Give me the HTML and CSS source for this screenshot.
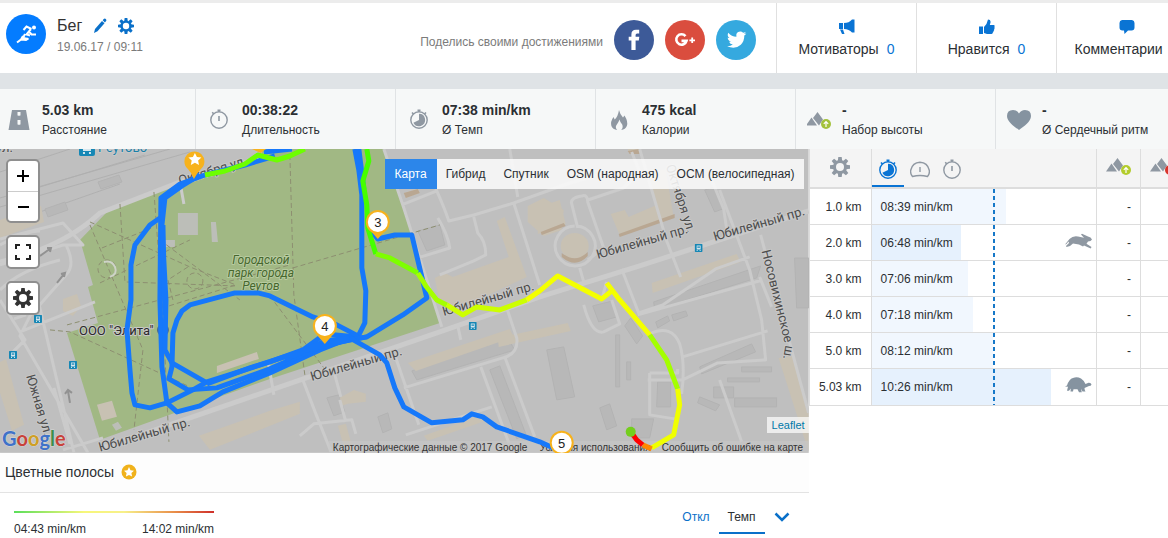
FILE: index.html
```html
<!DOCTYPE html>
<html lang="ru">
<head>
    <meta charset="UTF-8">
    <meta name="viewport" content="width=device-width, initial-scale=1.0">
    <title>Бег 19.06.17</title>
    <link rel="stylesheet" href="styles.css">
</head>
<body>
<!-- shared icons -->
<svg class="sprite" aria-hidden="true">
    <symbol id="gear" viewBox="0 0 20 20">
        <g fill="currentColor"><circle cx="10" cy="10" r="7"/>
        <path d="M8.3 0h3.4l.5 4H7.800zM8.300 20h3.400l.5-4H7.800zM0 8.300v3.400l4 .5V7.800zM20 8.300v3.400l-4 .5V7.800zM1.700 4.100l2.400-2.400 3.200 2.500-3.100 3.100zM18.300 4.100l-2.400-2.400-3.200 2.500 3.100 3.100zM1.700 15.900l2.400 2.400 3.200-2.500-3.100-3.100zM18.300 15.900l-2.400 2.400-3.200-2.500 3.100-3.100z"/></g>
        <circle class="gear-hole" cx="10" cy="10" r="4"/>
    </symbol>
    <symbol id="watch" viewBox="0 0 20 20">
        <g fill="none" stroke="currentColor"><circle cx="10" cy="11" r="8.200" stroke-width="1.400"/>
        <path d="M10 7v5" stroke-width="1.600"/><path d="M8.500 1.200h3M10 1v2M3.200 3.300l1.600 1.600" stroke-width="1.500"/></g>
    </symbol>
    <symbol id="pace" viewBox="0 0 20 20">
        <g fill="none" stroke="currentColor"><circle cx="10" cy="11" r="8.200" stroke-width="1.400"/>
        <path d="M8.500 1.200h3M10 1v2M3 3.500l1.600 1.600M17 3.500l-1.600 1.600" stroke-width="1.600"/></g>
        <path d="M10 11V4.800a6.200 6.200 0 1 1-5.600 9z" fill="currentColor"/>
    </symbol>
    <symbol id="hill" viewBox="0 0 26 18">
        <path d="M0 13.500L5.500 5.500l5.500 8zM7 6l4.500-6 5.500 7.500-4 6z" fill="#8f98a2"/>
    </symbol>
    <symbol id="bus" viewBox="0 0 8 8">
        <rect width="8" height="8" rx="1" fill="#1687b5"/>
        <path d="M2 1.500h4v4H2zM2 6h1v1H2zM5 6h1v1H5z" fill="#d5e6ee"/><path d="M2.700 2.500h2.600v1.300H2.700z" fill="#1687b5"/>
    </symbol>
</svg>

<header class="top">
    <div class="sport">
        <svg class="sport-icon" viewBox="0 0 40 40"><circle cx="20" cy="20" r="20" fill="#047cff"/>
            <circle cx="28" cy="13.500" r="2" fill="#fff"/>
            <path d="M17.500 16l3-3.500 5 2.500M25 15l-4.500 5.500 3.500 1M19 20l-2 4 5.500 1M17 22l-2 3.500-4 3M15 25.500l5 .5 2.500-1.500M23 17.500l2.500 3h4.500" fill="none" stroke="#fff" stroke-width="2"/></svg>
        <div class="sport-info">
            <div class="sport-name">
                <h1>Бег</h1>
                <button type="button" aria-label="Изменить"><svg width="14" height="16" viewBox="0 0 14 16"><path d="M1 15l1-4 7-8 2.500 2.300-7 8zM9.700 2.200l1-1.200q1.200-1 2.300.2 1 1-.1 2.100l-1 1.200z" fill="#0a70c9"/></svg></button>
                <button type="button" aria-label="Настройки"><svg width="16" height="16"><use href="#gear"/></svg></button>
            </div>
            <div class="date">19.06.17 / 09:11</div>
        </div>
    </div>
    <div class="share">
        <span>Поделись своими достижениями</span>
        <a href="#" aria-label="Facebook"><svg viewBox="0 0 40 40"><circle cx="20" cy="20" r="20" fill="#3d5a98"/><path d="M17.400 30V20.500h-2.700v-3.700h2.700v-2.400q0-4.600 4.600-4.600h3.200v3.600h-2.100q-1.500 0-1.500 1.500v1.900h3.700l-.5 3.700h-3.200V30z" fill="#fff"/></svg></a>
        <a href="#" aria-label="Google Plus"><svg viewBox="0 0 40 40"><circle cx="20" cy="20" r="20" fill="#da4d3e"/><path d="M20.500 16.200a5.200 5.200 0 1 0 1 4.700h-5" fill="none" stroke="#fff" stroke-width="2.600"/><path d="M27.200 17.500v5.600M24.400 20.300H30" stroke="#fff" stroke-width="1.800"/></svg></a>
        <a href="#" aria-label="Twitter"><svg viewBox="0 0 40 40"><circle cx="20" cy="20" r="20" fill="#35a9df"/><path d="M11 26.200q3.400.2 5.800-1.700-2.800-.2-3.700-2.800.9.200 1.800-.1-3.100-.9-3.200-4 .9.500 1.800.5-2.800-2.100-1.200-5.300 3.200 3.900 8.100 4-.8-4.700 3.700-5.200 1.700-.1 3 1.200 1.300-.2 2.600-1-.4 1.400-1.700 2.200l2.300-.6q-.9 1.300-2 2.100.1 5.600-3.500 9.200-5.600 5.100-13.800 1.500z" fill="#fff"/></svg></a>
    </div>
    <button type="button" class="social">
        <svg width="16" height="16" viewBox="0 0 16 16" fill="#0a74d4"><path d="M0 4h4v6H0zM5 4q5 0 8-3.500h2.500v13H13Q10 10 5 10zM1 10.500h3l1.500 4.500H3z"/></svg>
        <span>Мотиваторы<b>0</b></span>
    </button>
    <button type="button" class="social">
        <svg width="16" height="16" viewBox="0 0 16 16" fill="#0a74d4"><path d="M0 7.500h4V15H0zM5 8q3-2.500 4-7.500 3 0 2.500 3L10.800 6H15q1.200.8.300 2 .8 1-.2 2.200.4 1-.6 1.800.2 1-.7 1.600.1 1.200-1.200 1.400H8L5 14z"/></svg>
        <span>Нравится<b>0</b></span>
    </button>
    <button type="button" class="social">
        <svg width="16" height="16" viewBox="0 0 16 16" fill="#0a74d4"><path d="M3 1h10q2.500.5 2.500 3v4.500q0 3-3 3H9L5.500 15l-.5-3.500H3.500q-3 0-3-3V4q0-2.500 2.500-3z"/></svg>
        <span>Комментарии<b>0</b></span>
    </button>
</header>

<section class="stats">
    <div class="stat">
        <svg viewBox="0 0 24 24" fill="#8f98a2"><path d="M5 2h5.500v20H1.500zM13.500 2H19l3.500 20h-9zM10.500 2h3v2h-3zM10.500 7.500h3V12h-3zM10.500 16.500h3V22h-3z" /><path d="M11.200 4h1.600v3.500h-1.600zM11 12h2v4.500h-2z" fill="#f6f8f8"/></svg>
        <dl><dt>5.03 km</dt><dd>Расстояние</dd></dl>
    </div>
    <div class="stat">
        <svg viewBox="-2 -1 24 24"><use href="#watch" width="20" height="20"/></svg>
        <dl><dt>00:38:22</dt><dd>Длительность</dd></dl>
    </div>
    <div class="stat">
        <svg viewBox="-2 -1 24 24"><use href="#pace" width="20" height="20"/></svg>
        <dl><dt>07:38 min/km</dt><dd>Ø Темп</dd></dl>
    </div>
    <div class="stat">
        <svg viewBox="0 0 24 24"><path d="M12 2q1 4.500 4 7.500l1.500-2q4 6.500 2.300 10.500-1.300 3.500-5.600 4 2.300-2.500 1-5.500-2-2-2.700-5-1 3-2.800 5.200-2 2.500.5 5.300-4.500-.6-5.800-4Q3.200 13.500 6.500 9l1.200 2.500Q11 8.500 12 2z" fill="#8f98a2"/></svg>
        <dl><dt>475 kcal</dt><dd>Калории</dd></dl>
    </div>
    <div class="stat">
        <svg viewBox="0 0 24 24"><use href="#hill" x="-1" y="4" width="26" height="18"/><circle cx="19" cy="16" r="5" fill="#a3c23c"/><path d="M19 19v-5M16.800 15.800l2.200-2.300 2.200 2.300" fill="none" stroke="#fff" stroke-width="1.200"/></svg>
        <dl><dt>-</dt><dd>Набор высоты</dd></dl>
    </div>
    <div class="stat">
        <svg viewBox="0 0 24 24"><path d="M12 22C7 18.500 0 13.500 0 8q0-6 6-6 4 0 6 3.500Q14 2 18 2q6 0 6 6c0 5.500-7 10.500-12 14z" fill="#8593a0"/></svg>
        <dl><dt>-</dt><dd>Ø Сердечный ритм</dd></dl>
    </div>
</section>

<main class="main">
    <section class="left">
        <div class="map">
            <svg class="map-canvas" viewBox="0 149 809 304">
                <rect y="149" width="809" height="304" fill="#bfbfbf"/>
                <path class="park" d="M80 240L107 212 157 191 200 176 262 158 262 149H384L404 208 440 323 270 379 100 440 67 333 98 323 88 287 93 285z"/>
                <g class="rail">
                    <path d="M0 172L70 149M0 198L170 149M0 207L190 152M0 226L120 184M40 187L145 155"/>
                </g>
                <g class="grey-house">
                    <path d="M98 182l21-7 3 7-21 7zM45 209l20-7 3 8-20 7zM418 231l22-6 5 20-18 6zM412 371l96-33 7 12-98 30zM327 398l12-3 6 17-11 4zM705 190l10-3 8 22-8 3zM378 417l10-4 4 16-9 4zM654 302l107-36-4 12-102 32zM593 306l20-5 4 16-18 5zM547 350l17-3 11 50-18 3zM616 335h4v52h-4zM627 362h4v18h-4zM658 382h13v25h-14zM700 367l52-23 4 8-54 22zM714 387h20v11h-20zM700 397l20 8-4 6-18-8zM735 398h42v9h-42zM728 378h32v4h-32zM742 367h30v5h-30zM631 318l12 18-6 8-12-18zM656 322l12-6 2 5-12 7zM672 315l14-4 2 5-14 5zM632 419h22l-4 19h-18zM600 408l10-4 7 22-10 4zM795 258h14v50h-12zM490 370l10-4 26 68-9 5zM10 250l16-6 5 9-16 6z"/>
                </g>
                <path class="park-house" d="M178 213h20v22h-20zM211 222h5l2 20h-6zM163 240h12v7h-12zM112 425l6-3 4 6-6 3z"/>
                <g class="house">
                    <path d="M0 220l41-14 3 16-44 16zM63 299l14-5 4 12-8 10-10-5zM0 362l6-3 18 66-12 6-12-38zM97 405l15-4 5 16-15 4zM217 366l40-14 2 7-42 14zM199 436l71-25 30-9 0 12-90 36zM340 398l14-8 12 4 0 8-18 2-6 2zM338 426l8-2 8 29h-8zM408 363l102-34 4 8-98 34zM404 193l14-4 2 4-14 5zM435 278l10-5 8 4 56-20-12-36 8-4 22 60-72 34-14-3zM424 436l56-20 6 5-58 20zM540 207l20-7 6 24-28 10zM528 206l16-8 20 12-2 20-18 6-16-14zM611 214l14-4 4 7 28-12-6-22-1-10 16-4 8 48-54 18zM652 283l85-29 4 8-88 31zM628 149h12v5h-10zM498 338l70-15 3 8-72 16zM779 358l14-2 16 54v42z"/>
                    <ellipse cx="575" cy="246" rx="14" ry="13"/>
                </g>
                <path class="wall" d="M541 232l23-9 2 3-24 9zM619 234l56-20v4l-55 19zM562 253q14 11 26-1v4q-12 13-26 1zM404 193l14-4 2 4-14 5zM628 151l12-2v5h-10z"/>
                <g class="road thick">
                    <path d="M100 449L440 332 540 297 640 266 809 211M0 262Q62 248 100 213L180 182 262 158"/>
                </g>
                <g class="road">
                    <path d="M384 149L404 208 442 327M0 265l63-20 20 0-20-22-63 16M66 245q10 20 0 30L30 316M0 290q20-20 60-30M30 316l-10 20 68 117M38 300l36 153M14 319l12-4M95 302l-75 30M0 300l25 40-12 12M0 245q26-14 40-14M180 182l4 22M54 388l16 56M63 450l40-12M303 380l13 34 24 60M268 360l6 35M395 355l24 70M335 375l6 22M404 388L503 358q16-4 14-20l-10-30M458 326l3 14M406 435l86-28M481 367l28 76M505 357l30 80M300 436l14-12 38-4 4 14M402 205L437 191 430 172M437 191q8 18 12 30l25-6 40-12 56-20 36-10M418 258l32-10q-2-14-12-30M440 275l34-14 12-6q0-14-8-22l-4-16M514 203l26 82M510 149l8 48M588 260l16-12-16-46q0-8-6-6-12 2-10 8l6 24M588 200l36-12 16-16-8-20M640 149l27 92 14 36M575 226a20 20 0 1 0 1 0M580 268l4 14M607 282l-4 14M622 269l17 44 24-8 53-36 34-12M720 190l30 80 12 50 4 40-48 3-35 17h-35M760 277l12 30M584 305q8 30 20 27l16-8-8-24M638 315l125-35M650 334q22-10 30 10 6 20 2 50M683 357l85-26M650 373h28v-4M650 373v42l25 4M720 380l22 62M761 235l48 178M710 175l14 34 4 26M340 400l6 22"/>
                </g>
                <path class="footpath" d="M90 222L190 267 236 285 169 306M90 225L143 350 134 430M120 204l5 78 110 4M102 248l52-21M154 192l9 120 6 130M188 267l-20 13 5 20M50 330l20 2 120 55M290 155l4 140 11 80M293 268L440 225M67 325L290 265M100 283L190 240M160 240l80 60M270 296l60 80"/>
                <g class="footpath"><circle cx="195" cy="281" r="8"/><circle cx="107" cy="269" r="9"/></g>
                <path d="M104 262q8-2 11 5t-5 10" fill="none" stroke="#ced3c8" stroke-width="2"/>
                <path class="arrow" d="M40 256l11-8M47 248l4 0-1 4M57 283l8-10M61 274l4-1-1 4M70 403l-2-12M65 394l3-4 4 3"/>
                <use href="#bus" x="34" y="315" width="8" height="8"/>
                <use href="#bus" x="9" y="351" width="8" height="8"/>
                <use href="#bus" x="69" y="361" width="8" height="8"/>
                <use href="#bus" x="469" y="322" width="8" height="8"/>
                <use href="#bus" x="695" y="244" width="8" height="8"/>
                <use href="#bus" x="79" y="140" width="16" height="16"/>

                <g class="label">
                    <text x="-4" y="152">ул.</text>
                    <text class="metro" x="98" y="152">Реутово</text>
                    <text transform="translate(180 185) rotate(-17)">Октября ул.</text>
                    <text transform="translate(666 166) rotate(72)">Октября ул.</text>
                    <text transform="translate(598 259) rotate(-16)">Юбилейный пр.</text>
                    <text transform="translate(715 241) rotate(-16)">Юбилейный пр.</text>
                    <text transform="translate(444 316) rotate(-16)">Юбилейный пр.</text>
                    <text transform="translate(312 381) rotate(-16)">Юбилейный пр.</text>
                    <text transform="translate(100 452) rotate(-16)">Юбилейный пр.</text>
                    <text transform="translate(26 376) rotate(73)">Южная ул.</text>
                    <text transform="translate(762 251) rotate(76)">Носовихинское</text>
                    <text transform="translate(786 345) rotate(100)">ш.</text>
                    <text class="place" x="79" y="335">ООО "Элита"</text>
                    <g class="park-name">
                        <text x="261" y="264">Городской</text>
                        <text x="261" y="277">парк города</text>
                        <text x="261" y="290">Реутов</text>
                    </g>
                </g>
                <circle cx="163" cy="330" r="6" fill="#4e6a8c"/>
                <rect class="terms-bg" x="329" y="441" width="480" height="12"/>
                <g class="terms">
                    <text x="333" y="451">Картографические данные © 2017 Google</text>
                    <a href="#"><text x="540" y="451">Условия использования</text></a>
                    <a href="#"><text x="662" y="451">Сообщить об ошибке на карте</text></a>
                </g>
                <text class="google" x="2" y="446"><tspan fill="#3f72c9">G</tspan><tspan fill="#c8423a">o</tspan><tspan fill="#cf9f24">o</tspan><tspan fill="#3f72c9">g</tspan><tspan fill="#3c8f4c">l</tspan><tspan fill="#c8423a">e</tspan></text>

                <!-- track -->
                <g class="track">
                    <path d="M275 156L245 165 205 175 180 184 161 198 160 300 162 367 167 403 177 412 200 406 223 392 270 373 320 350 350 338M264 152L292 149"/>
                    <path d="M200 175L182 186 165 198 162 225 166 300 165 350 172 363 207 383M163 240l2 60M163 225l2 90"/>
                    <path d="M160 218L150 225 135 245 131 265V300L127 330 130 370 132 393 135 405 150 408 167 403 193 390 207 382 270 362 303 350 325 334 358 337"/>
                    <path d="M360 337L337 325 313 317 270 296 258 293 235 293 190 305 182 311 177 320 173 333 172 367 169 379 188 390 217 388 270 369 325 345 367 337"/>
                    <path d="M355 149L359 170 362 195V268L366 291 365 323 359 335M359 149l5 40"/>
                    <path d="M369 228L378 239 395 235 412 235 427 298 403 315 367 337 350 340 300 352 250 368 207 384M285 360l40-19 25-3"/>
                    <path d="M350 338L380 355 387 363 395 388 404 407 432 423 463 420 472 414 483 417 497 427 540 442 562 452"/>
                </g>
                <g class="track pace-track">
                    <path stroke="#6dff00" d="M205 175L225 171 245 164 258 155 277 160 290 156 305 149"/>
                    <path stroke="#45ff00" d="M367 149L369 161 363 181 367 205 368 228 376 254"/>
                    <path stroke="#7dff00" d="M376 254L390 258 418 273"/>
                    <path stroke="#a4ff00" d="M418 273L426 286 437 300 447 305"/>
                    <path stroke="#cdff00" d="M447 305L463 315 477 307 500 310 527 300"/>
                    <path stroke="#f4ff00" d="M527 300L540 291 558 276 602 299 612 291M607 283L620 300 650 335"/>
                    <path stroke="#a4ff00" d="M650 335L667 360 678 389"/>
                    <path stroke="#f0ff00" d="M678 389L680 405 674 435 652 448"/>
                    <path stroke="#ff8800" d="M652 449L643 445"/>
                    <path stroke="#ff0000" d="M643 445L637 440 632 433"/>
                </g>
                <circle cx="631" cy="432" r="5" fill="#74ce1d"/>

                <g class="pin">
                    <path d="M194 179q-2-6-6-10a10 10 0 1 1 13 0q-4 4-7 10z"/>
                    <path fill="#fff" d="M195 153l2 4 4.500.5-3.300 3 .9 4.500-4.100-2.200-4.100 2.200.9-4.500-3.300-3 4.500-.5z"/>
                    <path d="M252 149h14l-5 4z"/>
                    <path d="M378 239l-7-8h14z"/><circle cx="378" cy="222" r="12"/><circle class="pin-face" cx="378" cy="222" r="10"/>
                    <path d="M325 344l-7-8h14z"/><circle cx="325" cy="326" r="12"/><circle class="pin-face" cx="325" cy="326" r="10"/>
                    <circle cx="562" cy="443" r="12"/><circle class="pin-face" cx="562" cy="443" r="10"/>
                    <text x="378" y="227">3</text>
                    <text x="325" y="331">4</text>
                    <text x="562" y="448">5</text>
                </g>
            </svg>
            <div class="map-tools">
                <div class="tool-group">
                    <button type="button" aria-label="Приблизить"><svg width="14" height="14" viewBox="0 0 14 14"><path d="M7 1v12M1 7h12" stroke="#000" stroke-width="2"/></svg></button>
                    <button type="button" aria-label="Отдалить"><svg width="14" height="14" viewBox="0 0 14 14"><path d="M2 7h11" stroke="#000" stroke-width="2"/></svg></button>
                </div>
                <div class="tool-group">
                    <button type="button" aria-label="Во весь экран"><svg width="16" height="16" viewBox="0 0 16 16"><path d="M1 5V1h4M11 1h4v4M15 11v4h-4M5 15H1v-4" fill="none" stroke="#222" stroke-width="2"/></svg></button>
                </div>
                <div class="tool-group">
                    <button type="button" aria-label="Настройки карты"><svg width="20" height="20"><use href="#gear"/></svg></button>
                </div>
            </div>
            <div class="layers">
                <button type="button" class="active">Карта</button>
                <button type="button">Гибрид</button>
                <button type="button">Спутник</button>
                <button type="button">OSM (народная)</button>
                <button type="button">OCM (велосипедная)</button>
            </div>
            <a class="leaflet" href="#">Leaflet</a>
        </div>

        <h2 class="stripes-title">Цветные полосы
            <svg width="16" height="16" viewBox="0 0 16 16"><circle cx="8" cy="8" r="7.500" fill="#f0b21c"/><path fill="#fff" d="M8 3l1.500 3.300 3.500.4-2.600 2.400.7 3.500L8 10.900l-3.100 1.700.7-3.500L3 6.700l3.500-.4z"/></svg>
        </h2>
        <div class="stripes">
            <div class="scale">
                <div class="scale-line"></div>
                <div class="scale-labels"><span>04:43 min/km</span><span>14:02 min/km</span></div>
            </div>
            <div class="modes">
                <button type="button">Откл</button>
                <button type="button" class="active">Темп</button>
                <button type="button" class="more" aria-label="Ещё"><svg width="16" height="12" viewBox="0 0 16 12"><path d="M1.500 2.500L8 9l6.500-6.500" fill="none" stroke="#0a70c9" stroke-width="2.500"/></svg></button>
            </div>
        </div>
    </section>

    <section class="right">
        <table class="splits">
            <colgroup><col class="col-km"><col><col class="col-up"><col class="col-down"></colgroup>
            <thead>
            <tr>
                <th class="settings"><button type="button" aria-label="Настройки таблицы"><svg width="20" height="20"><use href="#gear"/></svg></button></th>
                <th>
                    <div class="tabs">
                        <button type="button" class="active" aria-label="Темп"><svg width="20" height="20"><use href="#pace"/></svg></button>
                        <button type="button" aria-label="Скорость"><svg width="20" height="20" viewBox="0 0 20 20" fill="none" stroke="currentColor"><path d="M2.500 17.500Q0 14.500.8 11 2.500 3.500 10 3.200q7.500.3 9.200 7.800.8 3.500-1.700 6.500-7.500-2-15 0z" stroke-width="1.400"/><path d="M10 8v5" stroke-width="1.400"/></svg></button>
                        <button type="button" aria-label="Время"><svg width="20" height="20"><use href="#watch"/></svg></button>
                    </div>
                </th>
                <th class="climb"><svg width="26" height="20" viewBox="0 0 26 20"><use href="#hill" width="26" height="18"/><circle cx="20" cy="12" r="5" fill="#b3cc2c"/><path d="M20 15v-5M17.800 11.800L20 9.500l2.200 2.300" fill="none" stroke="#fff" stroke-width="1.200"/></svg></th>
                <th class="climb"><svg width="26" height="20" viewBox="0 0 26 20"><use href="#hill" width="26" height="18"/><circle cx="20" cy="12" r="5" fill="#d8352c"/></svg></th>
            </tr>
            </thead>
            <tbody>
            <tr><td>1.0 km</td><td class="pace"><div class="bar" style="width: 60%"></div><span>08:39 min/km</span></td><td>-</td><td></td></tr>
            <tr><td>2.0 km</td><td class="pace"><div class="bar fast" style="width: 40%"></div><span>06:48 min/km</span>
                <svg class="animal" viewBox="0 0 27 16" fill="#8f98a2"><path d="M0 11.500L4.500 6Q8 2.500 13 3.500l6 1.300L16 1.500l1-.8 6 2.800q3 .3 4 3-1 2-4 2l-1.500 2.300 5 3.200-.8 1.500-6.700-3-1 1-4-2-6-1-3 2.500-3.500 1-.5-1 3-3-.5-1.500-2 2.500z"/></svg></td><td>-</td><td></td></tr>
            <tr><td>3.0 km</td><td class="pace"><div class="bar" style="width: 43%"></div><span>07:06 min/km</span></td><td>-</td><td></td></tr>
            <tr><td>4.0 km</td><td class="pace"><div class="bar" style="width: 45%"></div><span>07:18 min/km</span></td><td>-</td><td></td></tr>
            <tr><td>5.0 km</td><td class="pace"><div class="bar" style="width: 54%"></div><span>08:12 min/km</span></td><td>-</td><td></td></tr>
            <tr><td>5.03 km</td><td class="pace"><div class="bar slow" style="width: 80%"></div><span>10:26 min/km</span>
                <svg class="animal" viewBox="0 0 27 16" fill="#8593a0"><path d="M0 9.500l2-1Q4 2 8 1q4-1.500 8 .5 3 2 4.500 5.500l3-1.200q2.500-.3 3 1.700-.5 1.500-2.500 1.500l-4.500 2q0 2 1 3.500h-3L16 11.800l.8 3.500H14l-1.500-3H8.500L8 14.500H5.500l.3-3L4 13.700H2l1-4z"/></svg></td><td>-</td><td></td></tr>
            </tbody>
        </table>
    </section>
</main>
</body>
</html>
```
FILE: styles.css
```css
* { box-sizing: border-box; }
body { margin: 0; font-family: "Liberation Sans", Arial, sans-serif; font-size: 12px; color: #2b2f33; background: #fff; overflow: hidden; }
button { padding: 0; border: none; background: none; font: inherit; color: inherit; cursor: pointer; }
a { color: #0078a8; text-decoration: none; }
svg { display: block; flex-shrink: 0; }
h1, h2, dl, dd { margin: 0; font-weight: normal; }
.sprite { position: absolute; width: 0; height: 0; }
.gear-hole { fill: var(--hole, #fff); }

.top { display: flex; border-top: 3px solid #ececec; height: 73px; }
.sport { display: flex; gap: 11px; padding: 11px 6px; flex: 1; }
.sport-icon { width: 40px; height: 40px; }
.sport-name { display: flex; align-items: center; gap: 11px; height: 23px; color: #0a70c9; }
.sport-name h1 { font-size: 16px; color: #333; }
.date { line-height: 20px; color: #7b7b7b; }
.share { display: flex; align-items: center; gap: 11px; padding-right: 20px; }
.share span { color: #7b7b7b; padding-top: 8px; }
.share svg { width: 40px; height: 40px; margin-bottom: -4px; }
.social { flex: 0 0 140px; border-left: 1px solid #e0e0e0; display: flex; flex-direction: column; align-items: center; justify-content: center; gap: 5px; font-size: 14px; line-height: 18px; }
.social:last-child { margin-right: -28px; }
.social b { margin-left: 8px; font-weight: normal; color: #0a74d4; }

.stats { display: grid; grid-template-columns: 49fr 50fr 50fr 50fr 50fr 43fr; border-top: 16px solid #dfe3e6; background: #f6f8f8; height: 76px; }
.stat { display: flex; align-items: center; gap: 11px; padding: 2px 0 0 11px; border-right: 1px solid #e0e3e5; color: #8f98a2; white-space: nowrap; }
.stat:first-child { padding-left: 7px; }
.stat:last-child { border-right: none; }
.stat svg { width: 24px; height: 24px; }
.stat dl { color: #2b2f33; line-height: 20px; }
.stat dt { font-size: 14px; font-weight: bold; }

.main { display: grid; grid-template-columns: 9fr 4fr; }
.left, .right { min-width: 0; }
.right { overflow: hidden; }

.map { position: relative; overflow: hidden; }
.map-canvas { width: 100%; height: auto; }
.park { fill: #a1b884; }
.house { fill: #c8c1b3; }
.wall { fill: #b9a792; }
.grey-house { fill: #b8b8b8; stroke: #b3b3b3; }
.park-house { fill: #bcbeb8; }
.rail { fill: none; stroke: #b0b0b0; }
.road { fill: none; stroke: #cbcbcb; stroke-width: 3; stroke-linejoin: round; }
.road.thick { stroke-width: 5; }
.footpath { fill: none; stroke: #8d8f70; stroke-dasharray: 5 3; }
.arrow { fill: none; stroke: #929292; stroke-width: 2; }
.label { font-family: Roboto, sans-serif; font-size: 13px; fill: #4d4d4d; stroke: #c8c8c8; stroke-width: 2; paint-order: stroke; stroke-linejoin: round; }
.label .metro { fill: #1980a8; }
.label .place { fill: #2b2b2b; }
.park-name { font-style: italic; font-size: 12px; fill: #46672d; stroke: #b7cba0; text-anchor: middle; }
.terms { font-size: 10px; }
.terms text { fill: #333; }
.terms-bg { fill: #c8c8c8; fill-opacity: .6; }
.google { font-family: Lato, sans-serif; font-size: 20px; font-weight: bold; stroke: #d8d8d8; stroke-width: 1; paint-order: stroke; }
.track { fill: none; stroke: #1678fa; stroke-width: 5; stroke-linejoin: round; }
.pin { fill: #f7b21c; font-size: 13px; text-anchor: middle; }
.pin-face { fill: #fff; }
.pin text { fill: #222; }

.map-tools { position: absolute; top: 10px; left: 6px; display: flex; flex-direction: column; gap: 12px; }
.tool-group { border: 2px solid #8f8f8f; border-radius: 5px; background: #fff; overflow: hidden; color: #333; }
.tool-group button { display: flex; align-items: center; justify-content: center; width: 30px; height: 30px; }
.tool-group button + button { border-top: 1px solid #ccc; }
.layers { position: absolute; top: 10px; right: 5px; display: flex; background: rgba(250, 250, 250, .88); }
.layers button { padding: 0 9px; height: 30px; }
.layers .active { padding: 0 10px; background: #2c86ea; color: #fff; }
.leaflet { position: absolute; right: 0; bottom: 20px; padding: 0 4px 0 5px; background: rgba(255, 255, 255, .7); line-height: 16px; font-size: 11px; }

.stripes-title { display: flex; align-items: center; gap: 7px; height: 40px; padding-left: 5px; border-bottom: 1px solid #e3e3e3; background: #fdfdfd; font-size: 14px; }
.stripes { display: flex; justify-content: space-between; padding: 8px 14px; }
.scale { width: 200px; padding-top: 10px; }
.scale-line { height: 2px; background: linear-gradient(90deg, #5ade5a, #f7f77a 35%, #f7f08a 55%, #e98f4a 80%, #cf2f2a); }
.scale-labels { display: flex; justify-content: space-between; padding-top: 8px; line-height: 16px; }
.modes { display: flex; color: #0a70c9; }
.modes button { height: 33px; padding: 0 9px; }
.modes .active { border-bottom: 2px solid #0a70c9; padding-top: 2px; color: #2b2f33; }
.modes .more { padding-right: 5px; }

.splits { width: 100%; table-layout: fixed; border-collapse: separate; border-spacing: 0; border-bottom: 1px solid #ddd; white-space: nowrap; }
.col-km { width: 62px; }
.col-up { width: 44px; }
.col-down { width: 28px; }
.splits th { height: 40px; padding: 0; background: #f4f4f4; border-bottom: 2px solid #ddd; border-left: 1px solid #ddd; color: #8f98a2; vertical-align: middle; }
.splits td { height: 36px; padding: 0 9px; border-left: 1px solid #ddd; border-bottom: 1px solid #ddd; text-align: right; }
.splits tr:last-child td { border-bottom: none; }
.settings { --hole: #f4f4f4; }
.tabs { display: flex; height: 38px; }
.tabs button { width: 32px; padding: 2px 6px 0; }
.tabs .active { color: #0a74d4; border-bottom: 2px solid #0a74d4; padding-top: 4px; }
.climb { overflow: hidden; }
.climb svg { margin-left: 9px; }
.splits .pace { position: relative; text-align: left; }
.pace span { position: relative; }
.bar { position: absolute; top: 0; bottom: 0; left: 0; background: #f1f7fe; }
.bar.fast, .bar.slow { background: #e6f1fd; }
/* average pace */
.pace::after { content: ""; position: absolute; top: 0; bottom: 0; left: 54%; width: 2px; background: repeating-linear-gradient(#1678c8 0 4px, transparent 4px 7px); }
.animal { position: absolute; top: 8px; right: 4px; width: 27px; height: 16px; }
```
